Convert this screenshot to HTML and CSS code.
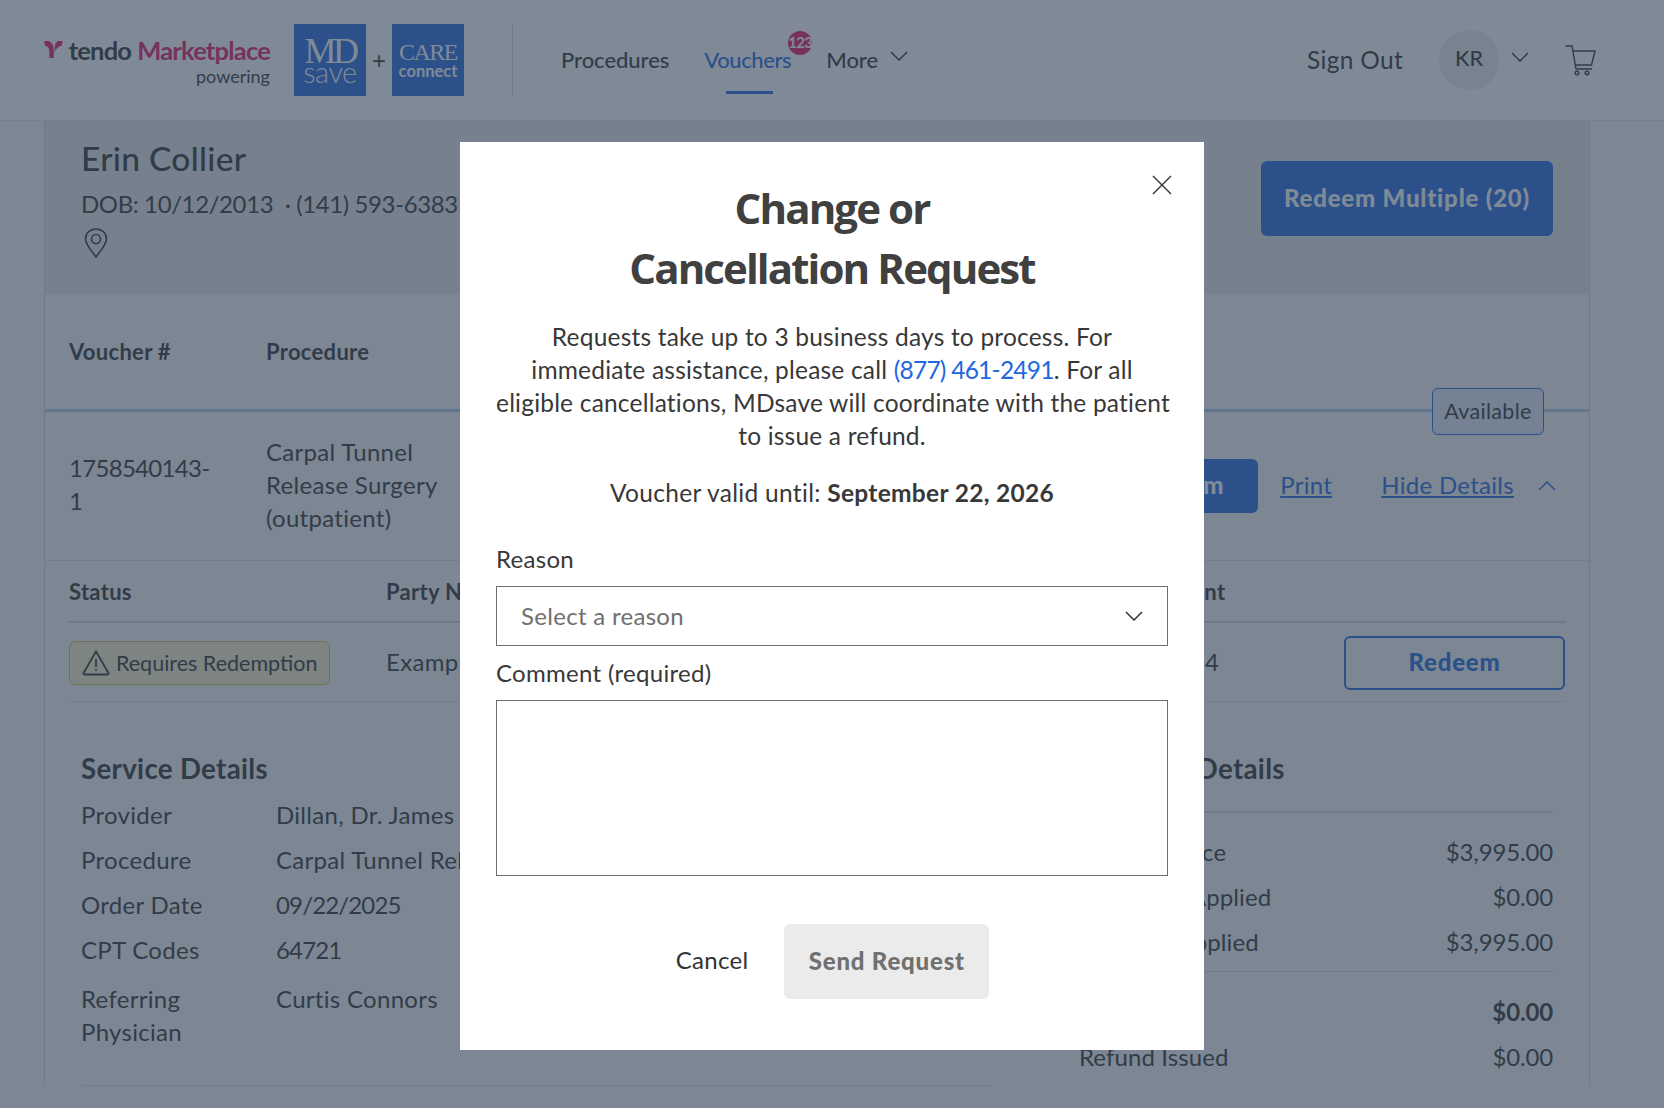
FILE: index.html
```html
<!DOCTYPE html>
<html lang="en">
<head>
    <meta charset="UTF-8">
    <meta name="viewport" content="width=device-width, initial-scale=1.0">
    <title>Vouchers</title>
    <link rel="stylesheet" href="styles.css">
</head>
<body>
    <header class="site-header">
        <div class="brand">
            <div class="brand-top">
                <svg class="tendo-mark" viewBox="0 0 21 19" width="21" height="19">
                    <path d="M0 0 L5 0 C8.500 1 11 5 11 10 L11 19 L6 19 L6 11 C6 8 3.500 5.500 1 5 Z" fill="#e6186b"/>
                    <path d="M21 0 L16 0 C13.500 1 12 4 12 7 L12 13 C13 8.500 16 6 20 5 Z" fill="#e6186b"/>
                </svg>
                <span class="tendo-word">tendo</span>
                <span class="market-word">Marketplace</span>
            </div>
            <div class="brand-sub">powering</div>
        </div>
        <div class="logo-box">
            <span class="logo-md">MD</span>
            <span class="logo-save">save</span>
        </div>
        <span class="logo-plus">+</span>
        <div class="logo-box">
            <span class="logo-care">CARE</span>
            <span class="logo-connect">connect</span>
        </div>
        <div class="header-divider"></div>
        <nav class="main-nav">
            <a class="nav-link" href="#">Procedures</a>
            <a class="nav-link active" href="#">Vouchers<span class="nav-badge">123</span></a>
            <a class="nav-link" href="#">More</a>
            <svg class="chevron nav-chevron" viewBox="0 0 18 10" width="18" height="10"><path d="M1 1 L9 9 L17 1"/></svg>
        </nav>
        <div class="user-area">
            <a class="sign-out" href="#">Sign Out</a>
            <div class="avatar">KR</div>
            <svg class="chevron" viewBox="0 0 18 10" width="18" height="10"><path d="M1 1 L9 9 L17 1"/></svg>
            <svg class="cart" viewBox="0 0 31 31" width="31" height="31">
                <path d="M0.500 1 L7 1 L11 24 L27 24"/>
                <path d="M7.500 6 L30 6 L26.500 20 L10 20"/>
                <circle cx="12" cy="28" r="1.800"/>
                <circle cx="22" cy="28" r="1.800"/>
            </svg>
        </div>
    </header>

    <main class="panel">
        <section class="patient">
            <div>
                <h1 class="patient-name">Erin Collier</h1>
                <p class="patient-meta">DOB: 10/12/2013 &nbsp;·&nbsp;(141) 593-6383</p>
                <svg class="pin" viewBox="0 0 24 30" width="24" height="30">
                    <path d="M12 29 C8 23 1.500 17 1.500 11 C1.500 5 6 1 12 1 C18 1 22.500 5 22.500 11 C22.500 17 16 23 12 29 Z"/>
                    <circle cx="12" cy="11" r="4.500"/>
                </svg>
            </div>
            <button class="btn-primary redeem-multiple">Redeem Multiple (20)</button>
        </section>

        <section class="voucher-table">
            <div class="voucher-head">
                <div class="col-number">Voucher #</div>
                <div>Procedure</div>
                <span class="available-tag">Available</span>
            </div>
            <div class="voucher-row">
                <div class="col-number voucher-id">1758540143-<br>1</div>
                <div class="col-procedure">Carpal Tunnel<br>Release Surgery<br>(outpatient)</div>
                <div class="row-actions">
                    <button class="btn-primary row-redeem">Redeem</button>
                    <a class="text-link print-link" href="#">Print</a>
                    <a class="text-link" href="#">Hide Details</a>
                    <svg class="chevron chevron-blue" viewBox="0 0 18 10" width="18" height="10"><path d="M1 9 L9 1 L17 9"/></svg>
                </div>
            </div>
        </section>

        <section class="party-table">
            <div class="party-grid party-head">
                <div>Status</div>
                <div>Party Name</div>
                <div class="account-head">Account</div>
                <div></div>
            </div>
            <div class="party-grid party-row">
                <div>
                    <span class="status-pill">
                        <svg class="warn" viewBox="0 0 28 26" width="28" height="26">
                            <path d="M14 1.500 L26.500 23 Q27 24.500 25.500 24.500 L2.500 24.500 Q1 24.500 1.500 23 Z"/>
                            <path d="M14 9 L14 17"/>
                            <path d="M14 19.500 L14 21"/>
                        </svg>
                        Requires Redemption
                    </span>
                </div>
                <div class="party-cell">Example</div>
                <div class="party-cell account-value">12344</div>
                <button class="btn-outline">Redeem</button>
            </div>
        </section>

        <section class="details">
            <div class="service-details">
                <h2 class="details-title">Service Details</h2>
                <dl class="service-list">
                    <dt>Provider</dt><dd>Dillan, Dr. James</dd>
                    <dt>Procedure</dt><dd>Carpal Tunnel Release Surgery (outpatient)</dd>
                    <dt>Order Date</dt><dd class="tight-digits">09/22/2025</dd>
                    <dt>CPT Codes</dt><dd class="tight-digits">64721</dd>
                    <dt class="referring">Referring Physician</dt><dd class="referring">Curtis Connors</dd>
                </dl>
            </div>
            <div class="payment-details">
                <h2 class="details-title">Payment Details</h2>
                <div class="payment-rows">
                    <div class="payment-row"><span>Voucher Price</span><span class="money">$3,995.00</span></div>
                    <div class="payment-row"><span>Discounts Applied</span><span class="money">$0.00</span></div>
                    <div class="payment-row"><span>Payment Applied</span><span class="money">$3,995.00</span></div>
                </div>
                <div class="payment-rows payment-total">
                    <div class="payment-row total-row"><span>Balance</span><span class="money">$0.00</span></div>
                    <div class="payment-row"><span>Refund Issued</span><span class="money">$0.00</span></div>
                </div>
            </div>
        </section>
    </main>

    <div class="overlay">
        <div class="modal">
            <svg class="modal-close" viewBox="0 0 20 20" width="20" height="20"><path d="M1 1 L19 19 M19 1 L1 19"/></svg>
            <h2 class="modal-title">Change or<br>Cancellation Request</h2>
            <p class="modal-text">Requests take up to 3 business days to process. For<br>immediate assistance, please call <a href="#">(877) 461-2491</a>. For all<br>eligible cancellations, MDsave will coordinate with the patient<br>to issue a refund.</p>
            <p class="modal-valid">Voucher valid until: <strong>September 22, 2026</strong></p>
            <label class="field-label reason-label">Reason</label>
            <div class="select-box">
                <span>Select a reason</span>
                <svg class="chevron" viewBox="0 0 18 10" width="18" height="10"><path d="M1 1 L9 9 L17 1"/></svg>
            </div>
            <label class="field-label">Comment (required)</label>
            <textarea class="comment-box"></textarea>
            <div class="modal-actions">
                <button class="btn-cancel">Cancel</button>
                <button class="btn-send" disabled>Send Request</button>
            </div>
        </div>
    </div>
</body>
</html>
```

FILE: styles.css
```css
* {
    box-sizing: border-box;
}

body {
    margin: 0;
    height: 1108px;
    overflow: hidden;
    background-color: #f7f7f7;
    color: #333333;
    font-family: Lato, "Open Sans", sans-serif;
    font-size: 24px;
    line-height: 33px;
    letter-spacing: 0.3px;
}

a {
    color: inherit;
    text-decoration: none;
}

h1, h2, p, dl, dd {
    margin: 0;
}

.chevron {
    display: block;
    fill: none;
    stroke: #333333;
    stroke-width: 1.5;
}

/* header */
.site-header {
    display: flex;
    align-items: center;
    height: 121px;
    padding: 0 68px 0 44px;
    background-color: #ffffff;
    border-bottom: 1px solid #e2e2e2;
}

.brand {
    width: 226px;
    flex-shrink: 0;
}

.brand-top {
    display: flex;
    align-items: center;
    height: 34px;
    margin-top: 1px;
    font-size: 25.500px;
    font-weight: 700;
    letter-spacing: -0.8px;
    white-space: nowrap;
}

.tendo-mark {
    margin-right: 6px;
    margin-top: -2px;
}

.tendo-word {
    margin-right: 6px;
}

.market-word {
    color: #e6186b;
}

.brand-sub {
    margin-top: -3px;
    text-align: right;
    font-size: 18px;
    line-height: 24px;
    letter-spacing: 0;
}

.logo-box {
    display: flex;
    flex-direction: column;
    align-items: center;
    justify-content: center;
    width: 72px;
    height: 72px;
    margin-left: 24px;
    background-color: #2267e0;
    color: #ffffff;
}

.logo-md {
    font-family: "Liberation Serif", serif;
    font-size: 36px;
    line-height: 30px;
    letter-spacing: -3.500px;
    margin-top: 2px;
}

.logo-save {
    margin-top: -4px;
    margin-bottom: 4px;
    font-size: 29px;
    font-weight: 300;
    line-height: 20px;
    letter-spacing: -0.5px;
}

.logo-care {
    margin-top: 2px;
    font-family: "Liberation Serif", serif;
    font-size: 24px;
    line-height: 23px;
    letter-spacing: -1.5px;
}

.logo-connect {
    font-size: 16.500px;
    font-weight: 700;
    line-height: 14px;
    letter-spacing: 0;
    margin-bottom: 3px;
}

.logo-plus {
    width: 14px;
    margin-left: 6px;
    margin-right: -18px;
    font-family: "Liberation Sans", sans-serif;
    font-weight: 400;
    font-size: 24px;
    text-align: center;
}

.header-divider {
    width: 1px;
    height: 72px;
    margin-left: 48px;
    background-color: #d8d8d8;
}

.main-nav {
    display: flex;
    align-items: center;
    gap: 35px;
    margin-left: 48px;
    margin-top: -1px;
    font-size: 22px;
    font-weight: 500;
    letter-spacing: -0.05px;
}

.nav-link {
    position: relative;
    display: block;
}

.nav-link.active {
    color: #2267e0;
    letter-spacing: -0.4px;
}

.nav-link.active::after {
    content: "";
    position: absolute;
    left: 22px;
    width: 47px;
    top: 48px;
    height: 3px;
    background-color: #2267e0;
}

.nav-badge {
    position: absolute;
    left: 84px;
    top: -12px;
    width: 24px;
    height: 24px;
    border-radius: 50%;
    background-color: #e6186b;
    color: #ffffff;
    font-size: 15px;
    font-weight: 700;
    line-height: 22px;
    letter-spacing: -0.7px;
    white-space: nowrap;
}

.nav-chevron {
    margin-left: -23px;
    margin-top: -7px;
}

.user-area {
    display: flex;
    align-items: center;
    margin-left: auto;
}

.sign-out {
    margin-right: 36px;
    font-size: 24.500px;
    margin-top: -2px;
}

.avatar {
    display: flex;
    align-items: center;
    justify-content: center;
    width: 60px;
    height: 60px;
    margin-right: 12px;
    padding-bottom: 3px;
    border-radius: 50%;
    background-color: #ececec;
    font-size: 21.500px;
    font-weight: 500;
    letter-spacing: 0;
}

.user-area .chevron {
    margin-top: -7px;
    margin-right: 36px;
}

.cart {
    fill: none;
    stroke: #333333;
    stroke-width: 1.4;
}

/* page panel */
.panel {
    width: 1546px;
    margin-left: 44px;
    border-left: 1px solid #d8d8d8;
    border-right: 1px solid #d8d8d8;
    background-color: #f7f7f7;
}

.patient {
    display: flex;
    justify-content: space-between;
    height: 173px;
    padding: 0 36px 0 36px;
    background-color: #e7e7e7;
}

.patient-name {
    margin-top: 15px;
    font-size: 33.500px;
    font-weight: 500;
    line-height: 44px;
}

.patient-meta {
    margin-top: 7px;
    letter-spacing: -0.4px;
}

.pin {
    display: block;
    margin: 8px 0 0 3px;
    fill: none;
    stroke: #333333;
    stroke-width: 1.6;
}

.btn-primary {
    padding: 0 0 3px;
    border: none;
    border-radius: 6px;
    background-color: #2267e0;
    color: #ffffff;
    font-family: inherit;
    font-size: 24px;
    font-weight: 900;
    letter-spacing: 0.8px;
}

.redeem-multiple {
    width: 292px;
    height: 75px;
    margin-top: 40px;
}

/* voucher table */
.voucher-table {
    position: relative;
}

.voucher-head {
    display: flex;
    align-items: center;
    height: 118px;
    padding: 0 0 0 24px;
    border-bottom: 3px solid #b0c7e6;
    font-size: 22px;
    font-weight: 700;
}

.col-number {
    width: 197px;
}

.voucher-id {
    letter-spacing: -0.7px;
}

.available-tag {
    position: absolute;
    left: 1387px;
    top: 94px;
    width: 112px;
    height: 47px;
    border: 1px solid #2267e0;
    border-radius: 6px;
    background-color: #e1ebfa;
    font-size: 21.500px;
    font-weight: 400;
    line-height: 44px;
    text-align: center;
}

.voucher-row {
    display: flex;
    align-items: center;
    height: 149px;
    padding: 0 33px 4px 24px;
    border-bottom: 1px solid #e0e0e0;
}

.row-actions {
    display: flex;
    align-items: center;
    margin-left: auto;
}

.row-actions .btn-primary,
.row-actions .chevron {
    position: relative;
    top: 2px;
}

.row-redeem {
    width: 160px;
    height: 54px;
}

.text-link {
    color: #2267e0;
    text-decoration: underline;
}

.print-link {
    margin: 0 49px 0 22px;
}

.chevron-blue {
    stroke: #2267e0;
    margin-left: 24px;
}

/* party table */
.party-table {
    padding: 0 23px 0 24px;
}

.party-grid {
    display: grid;
    grid-template-columns: 317px 760px 198px 221px;
    align-items: center;
}

.party-head {
    height: 62px;
    border-bottom: 2px solid #d4d4d4;
    font-size: 22px;
    font-weight: 700;
}

.account-head {
    margin-left: -4px;
}

.account-value {
    margin-left: 2px;
}

.party-row {
    height: 79px;
    padding-top: 2px;
    border-bottom: 1px solid #e0e0e0;
}

.party-cell {
    padding-bottom: 4px;
}

.status-pill {
    display: flex;
    align-items: center;
    gap: 6px;
    width: 261px;
    height: 44px;
    padding-left: 12px;
    border: 1px solid #d4c24a;
    border-radius: 6px;
    background-color: #faeec8;
    font-size: 21.500px;
    letter-spacing: 0;
}

.warn {
    fill: none;
    stroke: #333333;
    stroke-width: 1.8;
    flex-shrink: 0;
}

.btn-outline {
    height: 54px;
    padding: 0 0 3px;
    border: 2px solid #2267e0;
    border-radius: 6px;
    background-color: transparent;
    color: #2267e0;
    font-family: inherit;
    font-size: 24px;
    font-weight: 900;
    letter-spacing: 0.8px;
}

/* details */
.details {
    display: flex;
    gap: 87px;
    padding: 49px 36px 0 36px;
}

.details-title {
    font-size: 27.700px;
    font-weight: 700;
    line-height: 36px;
}

.service-details {
    width: 911px;
    height: 335px;
    border-bottom: 1px solid #e0e0e0;
}

.service-list {
    display: grid;
    grid-template-columns: 195px 1fr;
    grid-auto-rows: 45px;
    margin-top: 5px;
    line-height: 45px;
}

.service-list dd {
    white-space: nowrap;
}

.tight-digits {
    letter-spacing: -0.85px;
}

.service-list .referring {
    height: 66px;
    margin-top: 10px;
    line-height: 33px;
}

.service-list dt.referring {
    width: 130px;
}

.payment-details {
    flex: 1;
}

.payment-rows {
    margin-top: 24px;
    padding: 16px 0 7px;
    border-top: 2px solid #d4d4d4;
}

.payment-total {
    margin-top: 0;
    padding-top: 17px;
    border-top-width: 1px;
}

.payment-row {
    display: flex;
    justify-content: space-between;
    line-height: 45px;
    letter-spacing: 0.1px;
}

.money {
    letter-spacing: -0.15px;
}

.total-row {
    font-weight: 700;
}

/* modal */
.overlay {
    position: fixed;
    top: 0;
    left: 0;
    right: 0;
    bottom: 0;
    display: flex;
    justify-content: center;
    align-items: flex-start;
    background-color: rgba(48, 66, 85, 0.62);
}

.modal {
    position: relative;
    width: 744px;
    height: 908px;
    margin-top: 142px;
    padding: 36px;
    background-color: #ffffff;
    color: #383838;
    text-align: center;
}

.modal-close {
    position: absolute;
    top: 33px;
    right: 32px;
    fill: none;
    stroke: #333333;
    stroke-width: 1.4;
}

.modal-title {
    color: #404040;
    font-family: "Open Sans", sans-serif;
    font-size: 42px;
    font-weight: 700;
    line-height: 60px;
    letter-spacing: -1.9px;
}

.modal-text {
    margin-top: 22px;
    font-size: 24.500px;
    letter-spacing: 0.2px;
    white-space: nowrap;
}

.modal-text a {
    color: #2267e0;
    letter-spacing: -0.75px;
}

.modal-valid {
    margin-top: 24px;
    font-size: 24.500px;
}

.field-label {
    display: block;
    height: 33px;
    margin-top: 10px;
    text-align: left;
}

.reason-label {
    margin-top: 33px;
    margin-bottom: 11px;
}

.select-box {
    display: flex;
    align-items: center;
    justify-content: space-between;
    height: 60px;
    padding: 0 24px;
    border: 1px solid #707070;
    color: #6f6f6f;
}

.select-box span {
    padding-bottom: 2px;
}

.comment-box {
    display: block;
    width: 100%;
    height: 176px;
    margin-top: 11px;
    border: 1px solid #707070;
    border-radius: 0;
    resize: none;
}

.modal-actions {
    display: flex;
    justify-content: center;
    align-items: center;
    gap: 36px;
    margin-top: 48px;
    margin-left: 1px;
}

.btn-cancel {
    padding: 0 0 5px;
    border: none;
    background: none;
    color: #333333;
    font-family: inherit;
    font-size: 24px;
    letter-spacing: 0.3px;
}

.btn-send {
    width: 205px;
    height: 75px;
    padding: 0 0 3px;
    border: none;
    border-radius: 6px;
    background-color: #ebebeb;
    color: #707070;
    font-family: inherit;
    font-size: 24px;
    font-weight: 900;
    letter-spacing: 0.8px;
}
```
